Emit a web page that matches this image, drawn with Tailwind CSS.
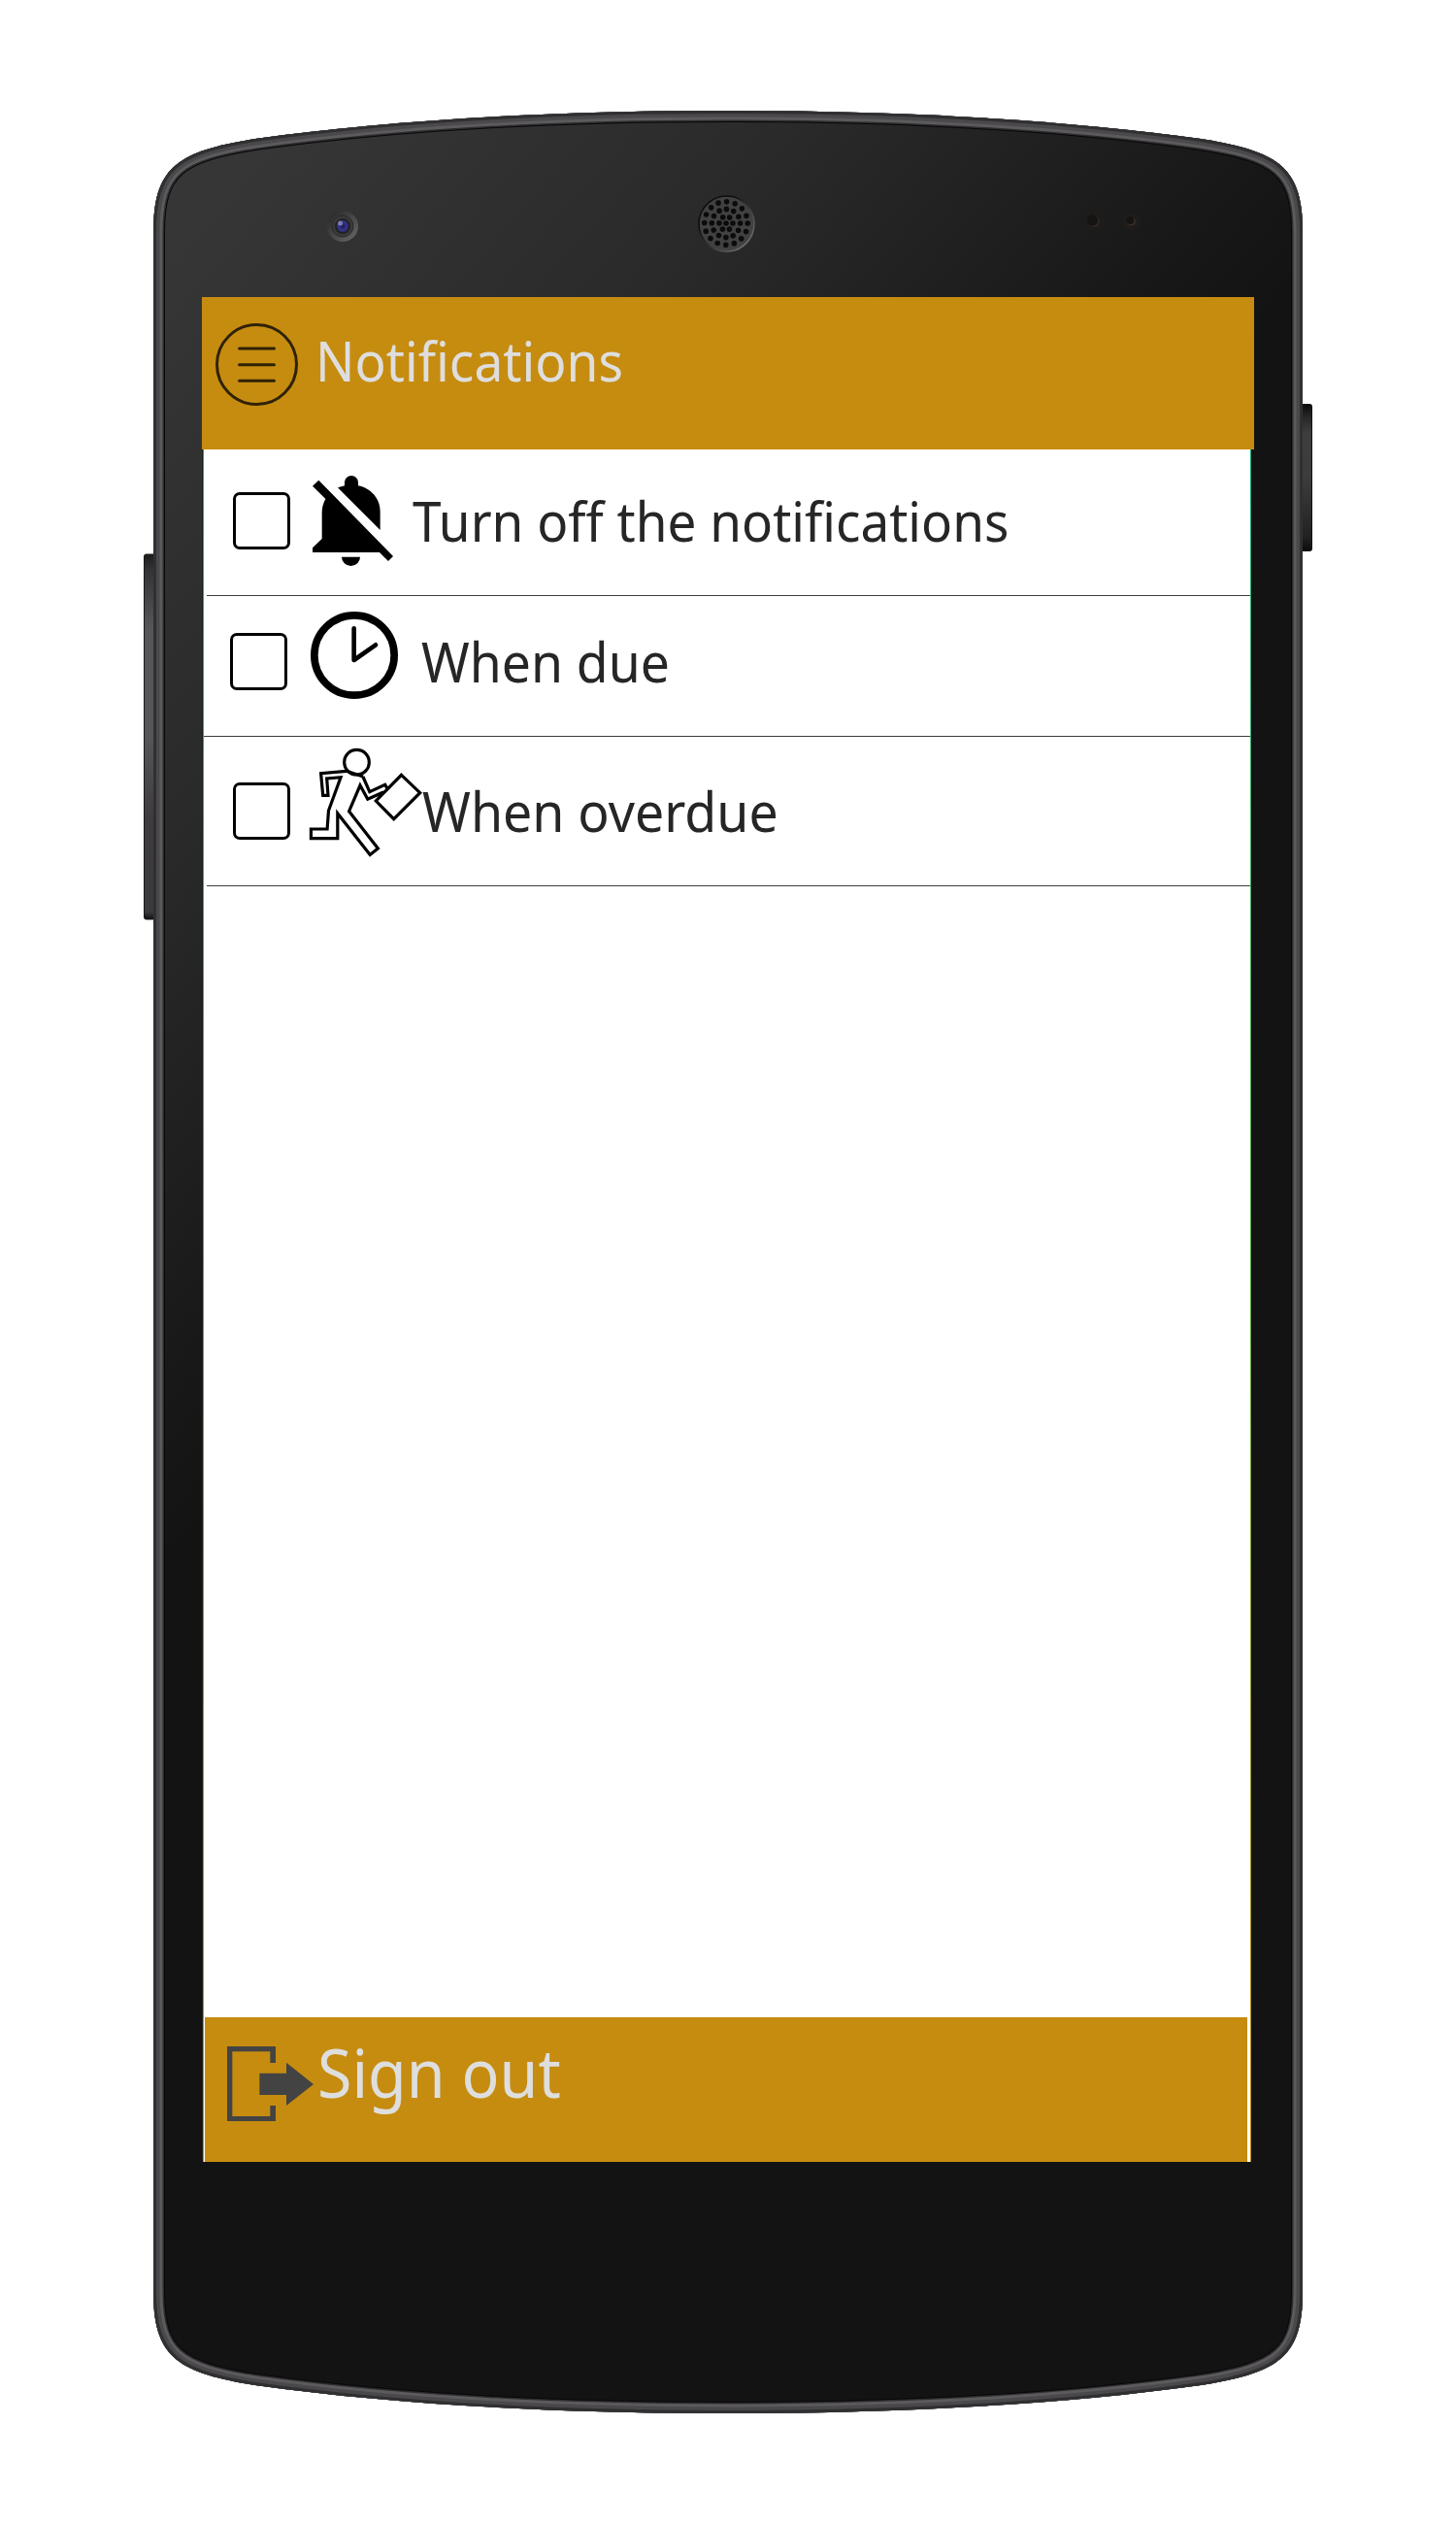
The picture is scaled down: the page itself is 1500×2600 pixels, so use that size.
<!DOCTYPE html>
<html lang="en">
<head>
<meta charset="utf-8">
<title>Notifications</title>
<script src="https://cdn.jsdelivr.net/npm/@tailwindcss/browser@4"></script>
</head>
<body class="bg-white">
<div class="relative w-[1500px] h-[2600px] overflow-hidden bg-white font-['Noto_Sans','Open_Sans',sans-serif]">

  <!-- Phone body -->
  <svg class="absolute inset-0" width="1500" height="2600" viewBox="0 0 1500 2600" fill="none" aria-hidden="true">
    <defs>
      <linearGradient id="face" gradientUnits="userSpaceOnUse" x1="225" y1="198" x2="900" y2="792">
        <stop offset="0" stop-color="#363636"/><stop offset=".44" stop-color="#2a2a2a"/><stop offset=".54" stop-color="#262626"/><stop offset=".86" stop-color="#181818"/><stop offset="1" stop-color="#131313"/>
      </linearGradient>
      <linearGradient id="keyL" x1="0" y1="0" x2="0" y2="1">
        <stop offset="0" stop-color="#1c1c1c"/><stop offset=".04" stop-color="#333234"/><stop offset=".2" stop-color="#565557"/><stop offset=".5" stop-color="#565557"/><stop offset=".72" stop-color="#3e3c3f"/><stop offset=".98" stop-color="#3a393b"/><stop offset="1" stop-color="#111"/>
      </linearGradient>
      <linearGradient id="keyR" x1="0" y1="0" x2="0" y2="1">
        <stop offset="0" stop-color="#0c0c0c"/><stop offset=".1" stop-color="#2a2a2a"/><stop offset=".2" stop-color="#3e3e3e"/><stop offset=".5" stop-color="#3c3c3c"/><stop offset=".9" stop-color="#222"/><stop offset="1" stop-color="#0c0c0c"/>
      </linearGradient>
      <linearGradient id="lens" x1="0" y1="0" x2="1" y2="1"><stop offset="0" stop-color="#232323"/><stop offset="1" stop-color="#6a6a6a"/></linearGradient>
      <radialGradient id="blue"><stop offset="0" stop-color="#191955"/><stop offset=".7" stop-color="#35358c"/><stop offset="1" stop-color="#2c2c70"/></radialGradient>
      <linearGradient id="rim" x1="0" y1="0" x2="1" y2="1"><stop offset=".3" stop-color="#0c0c0c"/><stop offset="1" stop-color="#858585"/></linearGradient>
      <path id="shell" d="M158 240C158 172 182 156 263 143C420 121 600 114 750 114S1080 121 1237 143C1318 156 1342 172 1342 240V2360C1342 2428 1318 2444 1237 2457C1080 2479 900 2486 750 2486S420 2479 263 2457C182 2444 158 2428 158 2360Z"/>
      <clipPath id="clip"><use href="#shell"/></clipPath>
    </defs>
    <rect x="148.500" y="571" width="14" height="376" rx="2" fill="url(#keyL)" stroke="#1b1b1b"/>
    <rect x="1338" y="416.500" width="13.500" height="151" rx="2" fill="url(#keyR)" stroke="#111"/>
    <g clip-path="url(#clip)">
      <use href="#shell" fill="url(#face)"/>
      <use href="#shell" stroke="#080808" stroke-width="24"/>
      <use href="#shell" stroke="#2c2b2d" stroke-width="22"/>
      <use href="#shell" stroke="#5c5a5d" stroke-width="19"/>
      <use href="#shell" stroke="#4a484b" stroke-width="13"/>
      <use href="#shell" stroke="#302f31" stroke-width="6"/>
    </g>
    <!-- Front camera -->
    <circle cx="353" cy="233" r="16" fill="url(#lens)"/>
    <circle cx="353" cy="233" r="11" fill="#3a3a3a" stroke="#2a2a2a"/>
    <circle cx="353" cy="233" r="8" fill="#222"/>
    <circle cx="353" cy="233" r="6" fill="url(#blue)"/>
    <circle cx="350.500" cy="230" r="2.500" fill="#9a9ac8" fill-opacity=".7"/>
    <!-- Earpiece -->
    <circle cx="748.500" cy="230.500" r="28.500" fill="#414141" stroke="url(#rim)" stroke-width="1.500"/>
    <g stroke="#0b0b0b" stroke-width="5.600" stroke-linecap="round">
      <circle cx="748" cy="230" r="22.300" stroke-dasharray="0 8.757"/>
      <circle cx="748" cy="230" r="14.600" stroke-dasharray="0 7.645"/>
      <circle cx="748" cy="230" r="7" stroke-dasharray="0 7.330"/>
      <path d="M748 230h.01"/>
    </g>
    <!-- Proximity sensors -->
    <circle cx="1126.500" cy="228" r="12" fill="#1e1c1b"/><circle cx="1127" cy="228" r="6" fill="#2f2520"/><circle cx="1125.500" cy="227" r="5.500" fill="#151413"/>
    <circle cx="1165.500" cy="228" r="9" fill="#1f1c1b"/><circle cx="1165.500" cy="228" r="4.500" fill="#3a2c26"/><circle cx="1164.300" cy="227" r="4" fill="#151413"/>
  </svg>

  <!-- Screen -->
  <main class="relative ml-[208px] pt-[306px] w-[1084px]">
    <header class="flex items-start w-[1084px] h-[157px] pt-[27px] pl-[14px] bg-[#c68c10]">
      <button class="w-[85px] h-[85px]" aria-label="Menu">
        <svg width="85" height="85" viewBox="0 0 85 85" fill="none" stroke="#2f2206" stroke-width="3" stroke-linecap="round"><circle cx="42.500" cy="42.500" r="41"/><path d="M24.500 26h36M24.500 42.700h36M24.500 59.300h36"/></svg>
      </button>
      <h1 class="ml-[18px] text-[57px] leading-[76px] whitespace-nowrap text-[#dedede] origin-left scale-x-[0.935]">Notifications</h1>
    </header>

    <div class="flex w-[1081px] h-[1764px]">
      <div class="w-px h-full bg-[#1c1c1c]"></div>
      <div class="w-px h-full bg-linear-to-b from-[#0fa878] via-[#5aa63c] to-[#c68c10]"></div>
      <div class="flex flex-col w-[1078px] h-full bg-white text-[#262626]">
        <div class="flex items-start h-[150px] pl-[30px]">
          <div class="mt-[44px] size-[59px] border-3 border-black rounded-[7px]"></div>
          <svg class="mt-[27px] ml-[23px]" width="83" height="93" viewBox="366 90 249 279"><path d="M385 104L615 339L600 354L366 122Z"/><path d="M408 158C398 175 395 190 395 205V285L366 313V327H580Z"/><path d="M444 127L575 258V200C575 160 545 128 507 121V110a21 20 0 0 0-42 0V121ZM456 341H513a28.500 28 0 0 1-57 0Z"/></svg>
          <span class="mt-[35px] ml-[20px] text-[57px] leading-[76px] whitespace-nowrap origin-left scale-x-[0.931]">Turn off the notifications</span>
        </div>
        <div class="ml-[3px] h-px bg-[#3c3c3c]"></div>
        <div class="flex items-start h-[144px] pl-[27px]">
          <div class="mt-[38px] size-[59px] border-3 border-black rounded-[7px]"></div>
          <svg class="mt-[16px] ml-[24px]" width="90" height="90" viewBox="360 90 270 270" fill="none" stroke="#000"><circle cx="495" cy="225" r="123.500" stroke-width="23"/><path d="M494 142V240L561 193" stroke-width="14" stroke-linecap="round" stroke-linejoin="round"/></svg>
          <span class="mt-[29px] ml-[24px] text-[57px] leading-[76px] whitespace-nowrap origin-left scale-x-[0.938]">When due</span>
        </div>
        <div class="h-px bg-[#3c3c3c]"></div>
        <div class="flex items-start h-[153px] pl-[30px]">
          <div class="mt-[47px] size-[59px] border-3 border-black rounded-[7px]"></div>
          <svg class="mt-[11px] ml-[18px]" width="119" height="113" viewBox="0 0 119 113" fill="none" stroke="#000" stroke-width="3.200"><circle cx="50.500" cy="15.200" r="12.800"/><path d="M40 24.300L13.600 26.700L15.700 49.300H21L19.700 32L34 30.700L21.500 65L20.100 84H3.400V93.700H30.800V68L64.200 110.500L72.400 104L42.600 65.700L54 39L61.800 53.300L78 46M56.900 30L63.800 45.700L79.700 38.300L81.800 42M96.500 28.300L115.700 46.700L88.700 73.700L70.300 55ZM40 24.300L57 30"/></svg>
          <span class="mt-[38px] -ml-px text-[57px] leading-[76px] whitespace-nowrap origin-left scale-x-[0.941]">When overdue</span>
        </div>
        <div class="ml-[3px] h-px bg-[#3c3c3c]"></div>
        <footer class="flex items-start mt-auto ml-px w-[1074px] h-[149px] bg-[#c68c10]">
          <svg class="mt-[30px] ml-[23px]" width="89" height="77" viewBox="102 144 267 231" fill="#434343"><path d="M102 144H252V195H235V160H118V360H235V327H252V375H102ZM202 227H285V194L369 261L285 327V294H202Z"/></svg>
          <span class="mt-[11px] ml-[4px] text-[69px] leading-[90px] whitespace-nowrap text-[#dedede] origin-left scale-x-[0.936]">Sign out</span>
        </footer>
      </div>
      <div class="w-px h-full bg-linear-to-b from-[#0fa878] via-[#5aa63c] to-[#c68c10]"></div>
    </div>
  </main>
</div>
</body>
</html>
